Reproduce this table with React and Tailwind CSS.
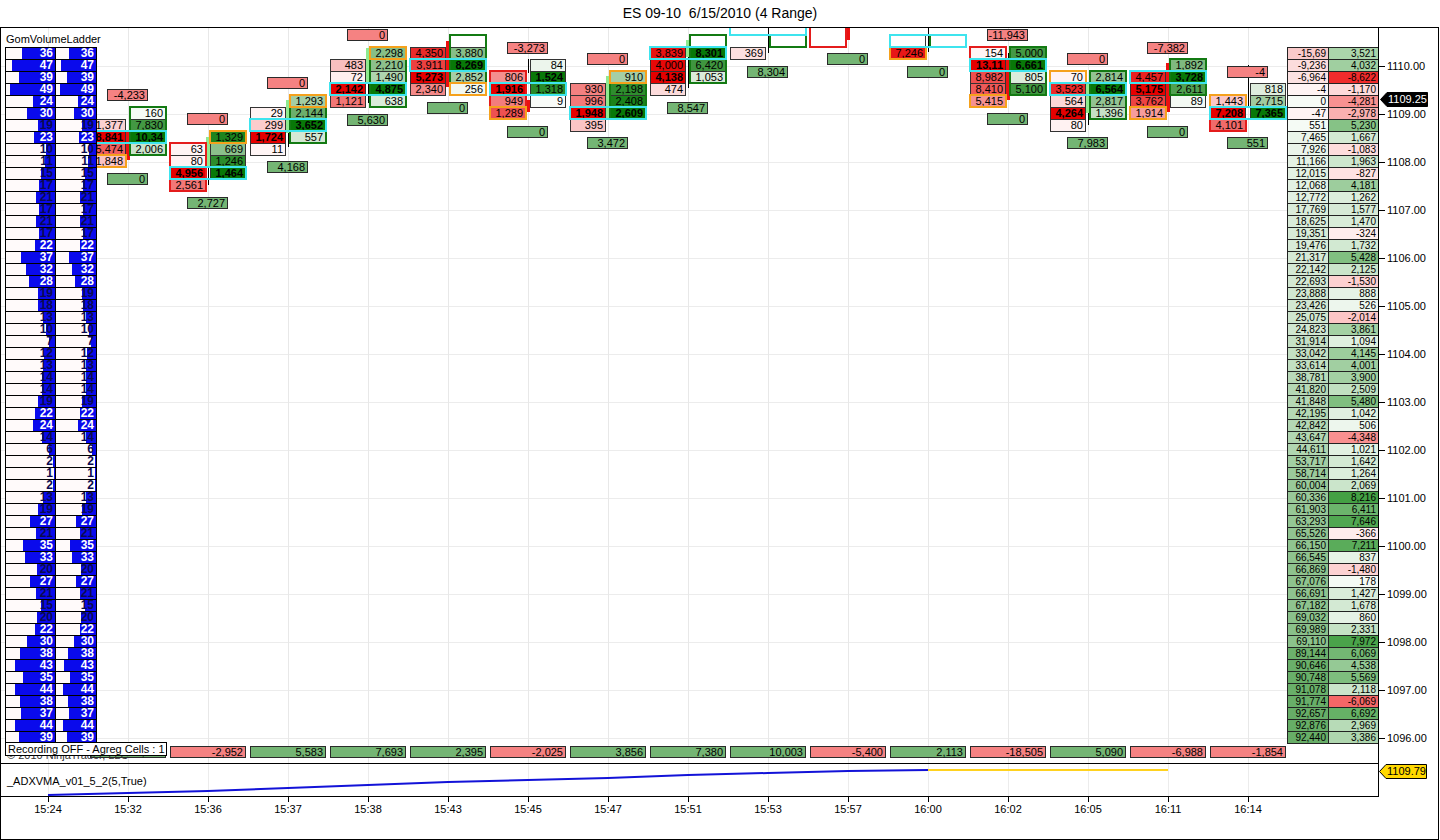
import React from 'react';

// chart canvas origin in page pixels (frame border is 1px)
const OX = 1;
const OY = 28;
const rowTop = (r) => 47 + 12 * r;

const TIMES = ['15:24', '15:32', '15:36', '15:37', '15:38', '15:43', '15:45', '15:47', '15:51', '15:53', '15:57', '16:00', '16:02', '16:05', '16:11', '16:14'];
const PRICES = ['1110.00', '1109.00', '1108.00', '1107.00', '1106.00', '1105.00', '1104.00', '1103.00', '1102.00', '1101.00', '1100.00', '1099.00', '1098.00', '1097.00', '1096.00'];

const VOL_LADDER = [
  36, 47, 39, 49, 24, 30, 19, 23, 10, 11, 15, 17, 21, 17, 21, 17, 22, 37, 32, 28,
  19, 18, 13, 10, 7, 12, 13, 14, 14, 19, 22, 24, 14, 6, 2, 1, 2, 13, 19, 27,
  21, 35, 33, 20, 27, 21, 15, 20, 22, 30, 38, 43, 35, 44, 38, 37, 44, 39,
];

const DELTA_LADDER = [
  [[-15698, '-15,69'], 3521], [-9236, 4032], [-6964, -8622], [-4, -1170], [0, -4281], [-47, -2978], [551, 5230], [7465, 1667], [7926, -1083], [11166, 1963],
  [12015, -827], [12068, 4181], [12772, 1262], [17769, 1577], [18625, 1470], [19351, -324], [19476, 1732], [21317, 5428], [22142, 2125], [22693, -1530],
  [23888, 888], [23426, 526], [25075, -2014], [24823, 3861], [31914, 1094], [33042, 4145], [33614, 4001], [38781, 3900], [41820, 2509], [41848, 5480],
  [42195, 1042], [42842, 506], [43647, -4348], [44611, 1021], [53717, 1642], [58714, 1264], [60004, 2069], [60336, 8216], [61903, 6411], [63293, 7646],
  [65526, -366], [66150, 7211], [66545, 837], [66869, -1480], [67076, 178], [66691, 1427], [67182, 1678], [69032, 860], [69989, 2331], [69110, 7972],
  [89144, 6069], [90646, 4538], [90748, 5569], [91078, 2118], [91774, -6069], [92657, 6692], [92876, 2969], [92440, 3386],
];

const BARS = [
  { cx: 128, top: ['-4,233', 89], bot: ['0', 173],
    bid: { r: 6, cells: [1377, 8841, 5474, 1848] },
    ask: { r: 5, cells: [160, 7830, [10340, '10,34'], 2006] },
    poc: 7, orange: [['bid', 9]], green: [5, 8], body: [131, 160, 'r'] },
  { cx: 208, top: ['0', 113], bot: ['2,727', 197],
    bid: { r: 8, cells: [63, 80, 4956, 2561] },
    ask: { r: 7, cells: [1329, 669, 1246, 1464] },
    poc: 10, orange: [['ask', 7]], red: [8, 11], body: [137, 167, 'g'], wick: [167, 185] },
  { cx: 288, top: ['0', 77], bot: ['4,168', 161],
    bid: { r: 5, cells: [29, 299, 1724, 11] },
    ask: { r: 4, cells: [1293, 2144, 3652, 557] },
    poc: 6, orange: [['ask', 4]], green: [5, 7], body: [100, 133, 'g'], wick: [133, 147] },
  { cx: 368, top: ['0', 29], bot: ['5,630', 114],
    bid: { r: 1, cells: [483, 72, 2142, 1121] },
    ask: { r: 0, cells: [2298, 2210, 1490, 4875, 638] },
    poc: 3, orange: [['ask', 0]], green: [1, 4], body: [48, 83, 'g'], wick: [83, 103] },
  { cx: 448, bot: ['0', 102],
    bid: { r: 0, cells: [4350, 3911, 5273, 2340] },
    ask: { r: -1, cells: [null, 3880, 8269, 2852, 256] },
    poc: 1, orange: [['ask', 3]], green: [-1, 2], body: [41, 87, 'r'] },
  { cx: 528, top: ['-3,273', 42], bot: ['0', 126],
    bid: { r: 2, cells: [806, 1916, 949, 1289] },
    ask: { r: 1, cells: [84, 1524, 1318, 9] },
    poc: 3, orange: [['bid', 5]], red: [2, 4], body: [100, 112, 'r'], wick: [59, 73] },
  { cx: 608, top: ['0', 53], bot: ['3,472', 137],
    bid: { r: 3, cells: [930, 996, 1948, 395] },
    ask: { r: 2, cells: [910, 2198, 2408, 2609] },
    poc: 5, orange: [['ask', 2]], green: [3, 5], body: [76, 120, 'g'] },
  { cx: 688, bot: ['8,547', 102],
    bid: { r: 0, cells: [3839, 4000, 4138, 474] },
    ask: { r: -1, cells: [null, 8301, 6420, 1053] },
    poc: 0, green: [-1, 2], body: [40, 57, 'g'], wick: [57, 88] },
  { cx: 768, bot: ['8,304', 66],
    bid: { r: 0, cells: [369], max: 4000 },
    ask: { r: -1, cells: [null] },
    poc: -2, green: [-1, -1], wick: [28, 53] },
  { cx: 848, bot: ['0', 53], red: [-2, -1], body: [27, 40, 'r'] },
  { cx: 928, bot: ['0', 66],
    bid: { r: -1, cells: [null, 7246], max: 8000 },
    ask: { r: -1, cells: [null] },
    poc: -1, orange: [['bid', 0]], green: [-1, -1], wick: [28, 52] },
  { cx: 1008, top: ['-11,943', 29], bot: ['0', 113],
    bid: { r: 0, cells: [154, [13115, '13,11'], 8982, 8410, 5415] },
    ask: { r: 0, cells: [5000, 6661, 805, 5100] },
    poc: 1, orange: [['bid', 4]], red: [0, 0], green: [0, 3], body: [60, 100, 'r'], wick: [53, 60] },
  { cx: 1088, top: ['0', 53], bot: ['7,983', 137],
    bid: { r: 2, cells: [70, 3523, 564, 4264, 80] },
    ask: { r: 2, cells: [2814, 6564, 2817, 1396] },
    poc: 3, orange: [['bid', 2]], green: [2, 5], body: [83, 113, 'g'], wick: [113, 125] },
  { cx: 1168, top: ['-7,382', 42], bot: ['0', 126],
    bid: { r: 2, cells: [4457, 5175, 3762, 1914] },
    ask: { r: 1, cells: [1892, 3728, 2611, 89] },
    poc: 2, orange: [['bid', 5]], green: [1, 3], body: [63, 112, 'r'] },
  { cx: 1248, top: ['-4', 66], bot: ['551', 137],
    bid: { r: 4, cells: [1443, 7208, 4101] },
    ask: { r: 3, cells: [818, 2715, 7365] },
    poc: 5, orange: [['bid', 4]], red: [6, 6], wick: [65, 107] },
];

// per-bar delta totals, bars 15:32 .. 16:14
const SUMMARY = [4135, -2952, 5583, 7693, 2395, -2025, 3856, 7380, 10003, -5400, 2113, -18505, 5090, -6988, -1854];

const ADX_LINE = '47,31 127,29 207,27 287,24 367,21 447,18 527,16 607,14 687,11 767,9 847,7 927,6';

const hex = (h) => [1, 3, 5].map((i) => parseInt(h.slice(i, i + 2), 16));
function mix(a, b, t) {
  const k = Math.max(0, Math.min(1, t));
  const A = hex(a);
  const B = hex(b);
  return `rgb(${A.map((c, i) => Math.round(c + (B[i] - c) * k)).join(',')})`;
}
const val = (c) => (Array.isArray(c) ? c[0] : c);
const label = (c) => (c == null ? '' : Array.isArray(c) ? c[1] : c.toLocaleString('en-US'));

const cumBg = (v) => (v < 0 ? mix('#fff4f4', '#f08a8a', -v / 40000) : mix('#f6fbf6', '#66ad66', v / 93000));
const deltaBg = (v) => (v < 0 ? mix('#fff5f5', '#f02a2a', -v / 8700) : mix('#f8fcf8', '#3c9c3c', v / 8600));

function Side({ cx, side, data }) {
  const nums = data.cells.map((c) => val(c) ?? 0);
  const max = data.max || Math.max(...nums);
  const count = nums.filter((n) => n > 0).length;
  const left = side === 'bid' ? cx - 38 : cx + 2;
  return (
    <div
      className="absolute flex w-[36px] flex-col border-x border-t border-[#333]"
      style={{ left: left - OX, top: rowTop(data.r) - OY }}
    >
      {data.cells.map((c, i) => {
        const v = val(c);
        const bold = v != null && count > 1 && v === max;
        const bg = v == null ? '#ffffff' : side === 'bid' ? mix('#fff7f7', '#e60000', v / max) : mix('#f9fcf9', '#087808', v / max);
        return (
          <div
            key={i}
            className={`h-[12px] overflow-hidden whitespace-nowrap border-b border-[#333] pr-[2px] text-right text-[11px] leading-[11px] ${bold ? 'font-bold' : ''}`}
            style={{ backgroundColor: bg }}
          >
            {label(c)}
          </div>
        );
      })}
    </div>
  );
}

function DeltaBox({ cx, y, text, red }) {
  return (
    <div
      className={`absolute h-[12px] w-[41px] border border-[#2a2a2a] pr-[2px] text-right text-[11px] leading-[10px] ${red ? 'bg-[#f58282]' : 'bg-[#74b574]'}`}
      style={{ left: cx - 21 - OX, top: y - OY }}
    >
      {text}
    </div>
  );
}

function Bar({ b }) {
  const { cx } = b;
  return (
    <>
      {b.wick && (
        <div className="absolute w-px bg-black" style={{ left: cx - OX, top: b.wick[0] - OY, height: b.wick[1] - b.wick[0] }} />
      )}
      {b.body && (
        <div
          className={`absolute w-[4px] ${b.body[2] === 'r' ? 'bg-[#ec1010]' : 'bg-[#8fea8f]'}`}
          style={{ left: cx - 2 - OX, top: b.body[0] - OY, height: b.body[1] - b.body[0] }}
        />
      )}
      {b.bid && <Side cx={cx} side="bid" data={b.bid} />}
      {b.ask && <Side cx={cx} side="ask" data={b.ask} />}
      {b.red && (
        <div
          className="absolute w-[38px] border-2 border-[#e41c1c]"
          style={{ left: cx - 39 - OX, top: rowTop(b.red[0]) - 1 - OY, height: 12 * (b.red[1] - b.red[0] + 1) + 2 }}
        />
      )}
      {b.green && (
        <div
          className="absolute w-[38px] border-2 border-[#137a13]"
          style={{ left: cx + 1 - OX, top: rowTop(b.green[0]) - 1 - OY, height: 12 * (b.green[1] - b.green[0] + 1) + 2 }}
        />
      )}
      {(b.orange || []).map(([s, r]) => (
        <div
          key={s + r}
          className="absolute h-[14px] w-[38px] border-2 border-[#f5a11c]"
          style={{ left: (s === 'bid' ? cx - 39 : cx + 1) - OX, top: rowTop(r) - 1 - OY }}
        />
      ))}
      {b.poc != null && (
        <div
          className="absolute h-[14px] w-[78px] border-2 border-[#3ee4ee]"
          style={{ left: cx - 39 - OX, top: rowTop(b.poc) - 1 - OY }}
        />
      )}
      {b.top && <DeltaBox cx={cx} y={b.top[1]} text={b.top[0]} red />}
      {b.bot && <DeltaBox cx={cx} y={b.bot[1]} text={b.bot[0]} />}
    </>
  );
}

function VolumeLadder() {
  return (
    <div className="absolute left-[4px] top-[19px] flex flex-col border-t border-black">
      {VOL_LADDER.map((v, i) => {
        const txt = v >= 22 ? 'text-white' : 'text-[#0a0a50]';
        return (
          <div key={i} className="flex h-[12px] border-b border-black text-[12px] font-bold leading-[11px]">
            <div className="relative w-[51px] border-x border-black bg-[#fffafa]">
              <div className="absolute bottom-0 right-0 top-0 bg-[#0a0aec]" style={{ width: v * 0.92 }} />
              <div className={`relative pr-[2px] text-right ${txt}`}>{v}</div>
            </div>
            <div className="relative w-[41px] border-r border-black bg-[#fffafa]">
              <div className="absolute bottom-0 right-0 top-0 bg-[#0a0aec]" style={{ width: v * 0.74 }} />
              <div className={`relative pr-[2px] text-right ${txt}`}>{v}</div>
            </div>
          </div>
        );
      })}
    </div>
  );
}

function DeltaLadder() {
  return (
    <div className="absolute left-[1286px] top-[19px] flex flex-col border-l border-t border-[#222]">
      {DELTA_LADDER.map(([cum, d], i) => (
        <div key={i} className="flex h-[12px] border-b border-[#222] text-[10px] leading-[11px]">
          <div
            className="w-[41px] overflow-hidden whitespace-nowrap border-r border-[#222] pr-[2px] text-right"
            style={{ backgroundColor: cumBg(val(cum)) }}
          >
            {label(cum)}
          </div>
          <div className="w-[49px] overflow-hidden whitespace-nowrap pr-[2px] text-right" style={{ backgroundColor: deltaBg(d) }}>
            {label(d)}
          </div>
        </div>
      ))}
    </div>
  );
}

function PriceTag({ text, yellow }) {
  return (
    <div className="relative h-[15px] w-[48px]">
      <svg className="absolute inset-0" width="48" height="15" viewBox="0 0 48 15">
        <polygon
          points="0.5,7.5 7,0.5 47.5,0.5 47.5,14.5 7,14.5"
          fill={yellow ? '#ffd800' : '#000000'}
          stroke="#000000"
        />
      </svg>
      <div className={`relative pl-[8px] text-[11px] leading-[15px] ${yellow ? 'text-black' : 'text-white'}`}>{text}</div>
    </div>
  );
}

export default function App() {
  return (
    <div className="h-[840px] w-[1440px] overflow-hidden bg-white font-['Liberation_Sans',Arial,sans-serif] text-black">
      {/* Title */}
      <div className="flex h-[27px] items-center justify-center whitespace-pre text-[14px]">ES 09-10  6/15/2010 (4 Range)</div>

      {/* Chart frame */}
      <div className="flex h-[813px] w-[1439px] flex-col border border-black">
        <div className="flex h-[769px]">
          <div className="flex w-[1377px] flex-col">
            {/* Main price panel */}
            <div className="relative h-[735px] overflow-hidden">
              {PRICES.map((p, i) => (
                <div key={p} className="absolute left-0 right-0 h-px bg-[#ececec]" style={{ top: 66 + 48 * i - OY }} />
              ))}
              {TIMES.map((t, i) => (
                <div key={t} className="absolute bottom-0 top-0 w-px bg-[#e8e8e8]" style={{ left: 48 + 80 * i - OX }} />
              ))}

              <div className="absolute left-[5px] top-[5px] text-[11px] leading-[12px]">GomVolumeLadder</div>

              {BARS.map((b) => (
                <Bar key={b.cx} b={b} />
              ))}

              <VolumeLadder />
              <DeltaLadder />

              {/* bar delta totals */}
              <div className="absolute left-[89px] top-[718px] flex gap-[4px]">
                {SUMMARY.map((v, i) => (
                  <div
                    key={i}
                    className={`h-[12px] w-[76px] border border-[#2a2a2a] pr-[2px] text-right text-[11px] leading-[10px] ${v < 0 ? 'bg-[#f58282]' : 'bg-[#74b574]'}`}
                  >
                    {v.toLocaleString('en-US')}
                  </div>
                ))}
              </div>

              <div className="absolute left-[6px] top-[721px] text-[11px] leading-[12px] text-[#333]">© 2010 NinjaTrader, LLC</div>
              <div className="absolute left-[4px] top-[714px] h-[14px] w-[162px] border border-black bg-white pl-[2px] text-[11px] leading-[12px]">
                Recording OFF - Agreg Cells : 1
              </div>
            </div>

            {/* Indicator panel */}
            <div className="relative h-[34px] overflow-hidden border-y border-black">
              {TIMES.map((t, i) => (
                <div key={t} className="absolute bottom-0 top-0 w-px bg-[#ececec]" style={{ left: 48 + 80 * i - OX }} />
              ))}
              <svg className="absolute left-0 top-0" width="1377" height="32" viewBox="0 0 1377 32">
                <polyline points={ADX_LINE} fill="none" stroke="#1212d8" strokeWidth="2" />
                <polyline points="927,6 1167,6" fill="none" stroke="#ffd21f" strokeWidth="2" />
              </svg>
              <div className="absolute left-[6px] top-[11px] text-[11px] leading-[13px]">_ADXVMA_v01_5_2(5,True)</div>
            </div>
          </div>

          {/* Price axis */}
          <div className="relative flex w-[60px] flex-col gap-[34px] border-l border-black pt-[31px]">
            {PRICES.map((p) => (
              <div key={p} className="flex h-[14px] items-center">
                <div className="h-px w-[6px] bg-black" />
                <span className="pl-[2px] text-[11px] leading-[14px]">{p}</span>
              </div>
            ))}
            <div className="absolute left-[1px] top-[64px]">
              <PriceTag text="1109.25" />
            </div>
            <div className="absolute left-0 top-[736px]">
              <PriceTag text="1109.79" yellow />
            </div>
          </div>
        </div>

        {/* Time axis */}
        <div className="flex flex-1 pl-[7px]">
          {TIMES.map((t) => (
            <div key={t} className="flex w-[80px] flex-col items-center">
              <div className="h-[5px] w-px bg-black" />
              <div className="text-[11px] leading-[15px]">{t}</div>
            </div>
          ))}
        </div>
      </div>
    </div>
  );
}
